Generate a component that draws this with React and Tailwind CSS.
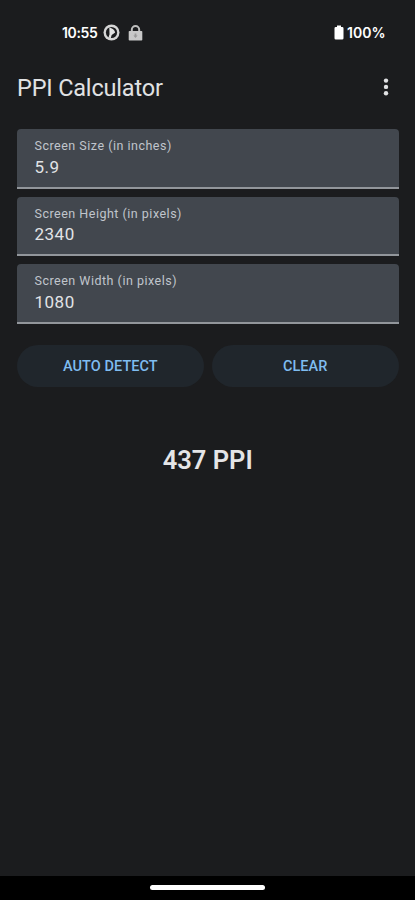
const fields = [
  { label: 'Screen Size (in inches)', value: '5.9' },
  { label: 'Screen Height (in pixels)', value: '2340' },
  { label: 'Screen Width (in pixels)', value: '1080' },
];

function StatusBar() {
  return (
    <div className="flex h-[65px] items-center pl-[62px] pr-[29.5px] text-white">
      <span className="font-['Inter',sans-serif] text-[14px] font-semibold leading-none tracking-[-0.35px]">10:55</span>
      <svg className="ml-[6px]" width="17" height="17" viewBox="0 0 17 17">
        <circle cx="8.5" cy="8.5" r="8" fill="#d6d6d6" />
        <circle cx="8.5" cy="8.5" r="5.6" fill="#1b1c1e" />
        <path d="M6.3 3.4c3 .6 5.4 2.400 5.900 5.100L8.700 11l-1 3.200-2.200-.8 1-3.200z" fill="#e2e2e2" />
      </svg>
      <svg className="ml-[8px]" width="15" height="16" viewBox="0 0 15 16">
        <path d="M3.8 7V4.8a3.7 3.7 0 0 1 7.4 0V7" fill="none" stroke="#bebebe" strokeWidth="2" />
        <rect x="0.7" y="6" width="13.600" height="9.6" rx="0.8" fill="#c8c8c8" />
        <path d="M6.6 8.5h1.8v2h1.2L7.5 13 5.4 10.5h1.2z" fill="#999" />
      </svg>
      <svg className="ml-auto" width="10" height="15" viewBox="0 0 10 15">
        <path d="M3 0.5h4V2h1.2A1.3 1.3 0 0 1 9.5 3.3v9.9a1.3 1.3 0 0 1-1.3 1.3H1.8A1.3 1.3 0 0 1 .5 13.2V3.3A1.3 1.3 0 0 1 1.8 2H3z" fill="#fff" />
      </svg>
      <span className="ml-[3px] font-['Inter',sans-serif] text-[14px] font-semibold leading-none">100%</span>
    </div>
  );
}

function Field({ label, value }) {
  return (
    <div className="flex h-[59.5px] flex-col rounded-t-[4px] border-b-2 border-[#92969b] bg-[#42474e] pl-[17.5px] pt-[9px]">
      <label className="text-[12.5px] leading-[16px] tracking-[0.5px] text-[#c0c5cc]">{label}</label>
      <span className="mt-[2.5px] text-[17px] leading-[20px] tracking-[0.5px] text-[#e1e3e6]">{value}</span>
    </div>
  );
}

function ActionButton({ children }) {
  return (
    <button className="h-[42px] flex-1 rounded-full bg-[#20262c] pt-[2px] text-[14.5px] font-medium leading-none tracking-[0.05px] text-[#7fbcf0]">
      {children}
    </button>
  );
}

export default function App() {
  return (
    <div className="flex h-[900px] w-[415px] flex-col overflow-hidden bg-[#1b1c1e] font-['Roboto',sans-serif]">
      <StatusBar />
      <header className="flex h-[46px] items-center justify-between pl-[17px] pr-[26px]">
        <h1 className="text-[23.5px] leading-[28px] tracking-[-0.18px] text-[#e1e2e4]">PPI Calculator</h1>
        <svg className="mb-[3px]" width="6" height="18" viewBox="0 0 6 18" fill="#e1e2e4">
          <circle cx="3" cy="2.600" r="2.2" />
          <circle cx="3" cy="8.9" r="2.2" />
          <circle cx="3" cy="15.2" r="2.2" />
        </svg>
      </header>
      <main className="flex flex-1 flex-col pl-[17px] pr-[16.5px] pt-[18px]">
        <div className="flex flex-col gap-[8px]">
          {fields.map((f) => <Field key={f.label} {...f} />)}
        </div>
        <div className="mt-[21.5px] flex gap-[8px]">
          <ActionButton>AUTO DETECT</ActionButton>
          <ActionButton>CLEAR</ActionButton>
        </div>
        <p className="mt-[57px] text-center text-[25.5px] font-semibold leading-[32px] text-[#e4e5e7]">437 PPI</p>
      </main>
      <footer className="flex h-[24px] justify-center bg-black pt-[9px]">
        <div className="h-[5px] w-[115px] rounded-full bg-white" />
      </footer>
    </div>
  );
}
